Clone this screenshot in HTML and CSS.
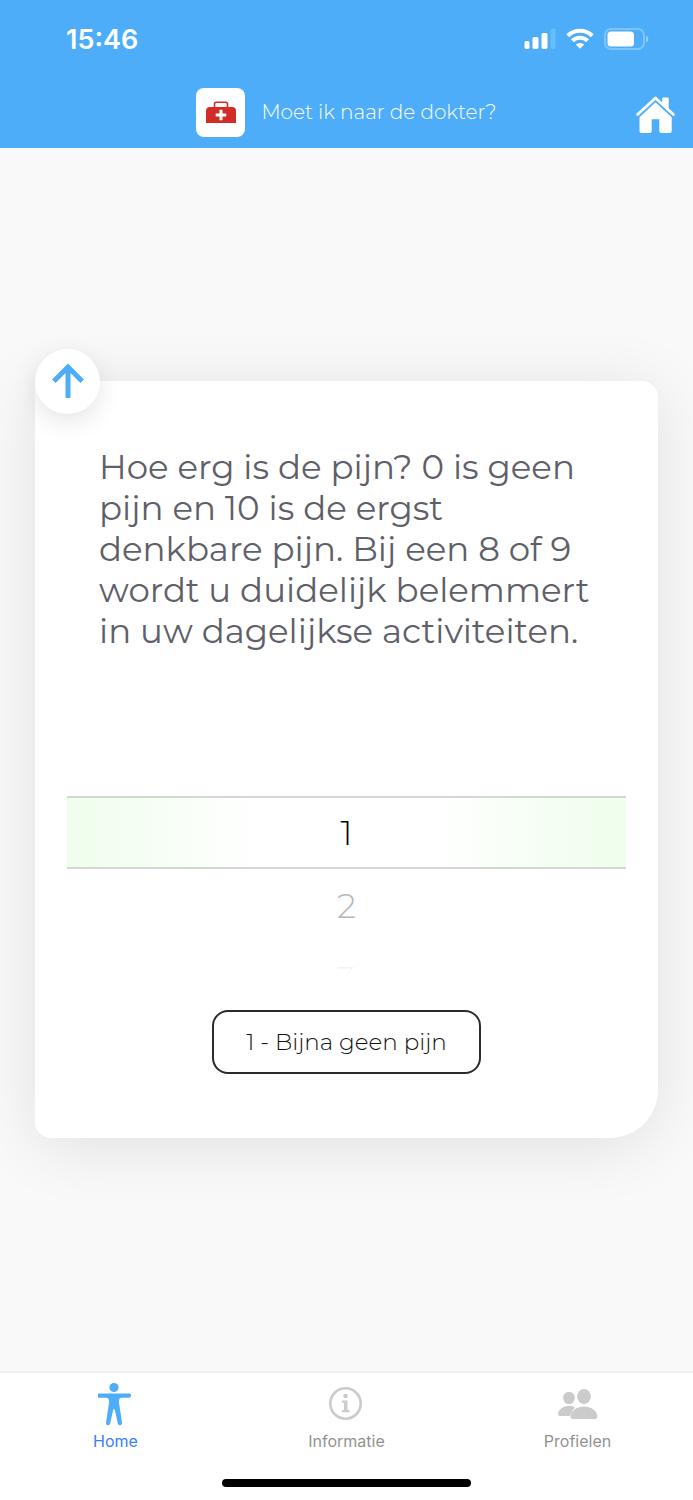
FILE: index.html
```html
<!DOCTYPE html>
<html lang="nl">
<head>
  <meta charset="UTF-8">
  <meta name="viewport" content="width=device-width, initial-scale=1">
  <title>Moet ik naar de dokter?</title>
  <link rel="stylesheet" href="styles.css">
</head>
<body>

<header class="header">
  <div class="status-bar">
    <span class="time">15:46</span>
    <div class="status-icons">
      <svg width="32" height="22" viewBox="0 0 32 22" fill="#fff">
        <rect x="0.500" y="13" width="5" height="8" rx="1.800"/>
        <rect x="8.500" y="9" width="6" height="12" rx="1.800"/>
        <rect x="17.500" y="5" width="6" height="16" rx="1.800"/>
        <rect x="26.500" y="0.500" width="5" height="20.500" rx="1.800" fill="#64c0fc"/>
      </svg>
      <svg width="28" height="22" viewBox="0 0 28 22" fill="none" stroke="#fff" stroke-width="4">
        <path d="M1.800 7.700a17.500 17.500 0 0 1 24.400 0"/>
        <path d="M6.400 12.800a11 11 0 0 1 15.200 0"/>
        <path d="M14 20.800l-4.200-4.200a6 6 0 0 1 8.400 0z" fill="#fff" stroke="none"/>
      </svg>
      <svg width="45" height="22" viewBox="0 0 45 22">
        <rect x="1" y="1" width="39" height="20" rx="6" fill="none" stroke="#7bc5fc" stroke-width="2"/>
        <rect x="3.500" y="3.500" width="26.500" height="15" rx="3.500" fill="#fff"/>
        <path d="M42 7.500c3 1 3 6 0 7z" fill="#8fcdfc"/>
      </svg>
    </div>
  </div>

  <div class="title-bar">
    <div class="brand">
      <span class="logo">
        <svg width="30" height="24" viewBox="0 0 30 24">
          <path d="M8.500 8V4.200a2 2 0 0 1 2-2h9a2 2 0 0 1 2 2V8" fill="none" stroke="#d12c26" stroke-width="1.600"/>
          <path d="M4 7h22a4 4 0 0 1 4 4v12H0V11a4 4 0 0 1 4-4z" fill="#d12c26"/>
          <path d="M15 9.700v10.600M9.700 15h10.600" stroke="#fff" stroke-width="3"/>
        </svg>
      </span>
      <h1>Moet ik naar de dokter?</h1>
    </div>
    <a href="#" class="home-link" aria-label="Home">
      <svg width="40" height="42" viewBox="0 0 40 42" fill="#fff">
        <path d="M1.600 23.500L19.500 7l17.900 16.500" fill="none" stroke="#4eadf9" stroke-width="7"/>
        <path d="M19.500 11.200L35.700 26.200V40a2 2 0 0 1-2 2h-8.400a2 2 0 0 1-2-2V28.300h-7.600V40a2 2 0 0 1-2 2H5.500a2 2 0 0 1-2-2V26.200z"/>
        <path d="M1.600 23.500L19.500 7l17.900 16.500" fill="none" stroke="#fff" stroke-width="2.800" stroke-linecap="round" stroke-linejoin="round"/>
        <path d="M26.300 12.500V7.500a1 1 0 0 1 1-1h4.400a1 1 0 0 1 1 1V18.500z"/>
      </svg>
    </a>
  </div>
</header>

<main class="content">
  <form class="card">
    <button type="button" class="back" aria-label="Terug">
      <svg width="32" height="36" viewBox="0 0 32 36" fill="none" stroke="#4eadf9" stroke-width="5">
        <path d="M1.800 17.200L16 3l14.200 14.200M16 3v31"/>
      </svg>
    </button>

    <p class="question">Hoe erg is de pijn? 0 is geen pijn en 10 is de ergst denkbare pijn. Bij een 8 of 9 wordt u duidelijk belemmert in uw dagelijkse activiteiten.</p>

    <div class="picker" role="radiogroup" aria-label="Pijnscore">
      <label class="option selected"><input type="radio" name="pain" value="1" checked>1</label>
      <label class="option near"><input type="radio" name="pain" value="2">2</label>
      <label class="option far"><input type="radio" name="pain" value="3">3</label>
    </div>

    <button type="submit" class="answer">1 - Bijna geen pijn</button>
  </form>
</main>

<footer class="footer">
  <nav class="tabs">
    <a href="#" class="tab active">
      <svg width="36" height="44" viewBox="1 0 36 44" fill="#4eadf9">
        <circle cx="17" cy="5.500" r="4.600"/>
        <path d="M2 11.400h30a2.100 2.100 0 0 1 0 4.300h-7.500q-2.500.3-2.700 3.800l3.200 21.200a2.100 2.100 0 0 1-4.200.8L18 28.500q-1-3-2 0L13.200 41.500a2.100 2.100 0 0 1-4.200-.8l3.200-21.200q-.2-3.500-2.700-3.800H2a2.100 2.100 0 0 1 0-4.300z"/>
      </svg>
      Home
    </a>
    <a href="#" class="tab">
      <svg width="36" height="44" viewBox="1 0 36 44" fill="#cbcbcb">
        <circle cx="17.500" cy="21.500" r="15.200" fill="none" stroke="#cbcbcb" stroke-width="2.600"/>
        <circle cx="17.500" cy="14" r="2.300"/>
        <path d="M14 18.500h5.500v9.500h2v2.300h-7.500v-2.300h2v-7.200h-2z"/>
      </svg>
      Informatie
    </a>
    <a href="#" class="tab">
      <svg width="40" height="44" viewBox="1 0 40 44" fill="#cbcbcb">
        <ellipse cx="12" cy="16" rx="5.800" ry="6.200"/>
        <path d="M18 25.200q-2.500-1.500-6-1.500C5 23.700 1 29 1 32q0 2 2 2h10q1-5 5-8.800z"/>
        <ellipse cx="27" cy="14.500" rx="6.800" ry="7.500"/>
        <path d="M27 24.500c8.500 0 13.300 5.500 13.300 9.800q0 2.700-2.500 2.700H16q-2.500 0-2.500-2.700c0-4.300 5-9.800 13.500-9.800z"/>
      </svg>
      Profielen
    </a>
  </nav>
  <div class="home-indicator"></div>
</footer>

</body>
</html>
```
FILE: styles.css
```css
* {
  box-sizing: border-box;
}

body {
  margin: 0;
  min-height: 100vh;
  display: flex;
  flex-direction: column;
  background: #f9f9f9;
  color: #5f5f69;
  font-family: Montserrat, Inter, sans-serif;
}

svg {
  display: block;
}

button {
  font: inherit;
  cursor: pointer;
}

.header {
  background: #4eadf9;
  color: #fff;
}

.status-bar {
  display: flex;
  justify-content: space-between;
  align-items: center;
  height: 76px;
  padding: 2px 44px 0 66px;
}

.time {
  font-family: Inter, sans-serif;
  font-size: 27px;
  font-weight: 600;
}

.status-icons {
  display: flex;
  gap: 10px;
}

.title-bar {
  display: grid;
  grid-template-columns: 1fr auto 1fr;
  align-items: center;
  height: 72px;
  padding: 0 17px;
}

.brand {
  grid-column: 2;
  display: flex;
  align-items: center;
  gap: 16px;
}

.logo {
  display: flex;
  justify-content: center;
  align-items: center;
  width: 49px;
  height: 49px;
  background: #fff;
  border-radius: 8px;
}

.brand h1 {
  margin: 0;
  font-size: 20px;
  font-weight: 300;
}

.home-link {
  justify-self: end;
}

.content {
  flex: 1;
  display: flex;
  align-items: center;
  padding: 48px 35px;
}

.card {
  position: relative;
  flex: 1;
  display: flex;
  flex-direction: column;
  align-items: center;
  padding: 66px 32px 64px;
  background: #fff;
  border-radius: 0 16px 48px 16px;
  box-shadow: 0 8px 64px rgba(0, 0, 0, 0.1);
}

/* sits on the top left corner of the card */
.back {
  position: absolute;
  top: -32px;
  left: 0;
  display: flex;
  justify-content: center;
  align-items: center;
  width: 65px;
  height: 65px;
  padding: 0;
  background: #fff;
  border: none;
  border-radius: 50%;
  box-shadow: 0 8px 24px rgba(0, 0, 0, 0.1);
}

.question {
  align-self: stretch;
  margin: 0;
  padding: 0 32px;
  font-size: 34px;
  line-height: 41px;
}

.picker {
  align-self: stretch;
  height: 290px;
  margin: 35px 0 33px;
  padding-top: 109px;
}

.option {
  display: flex;
  justify-content: center;
  align-items: center;
  height: 73px;
  font-size: 34px;
  font-weight: 300;
  cursor: pointer;
}

.option input {
  position: absolute;
  opacity: 0;
}

.selected {
  color: #000;
  border-top: 2px solid #d3d8d3;
  border-bottom: 2px solid #d3d8d3;
  background: linear-gradient(to right, #effeec, #fff 35%, #fff 65%, #effeec);
}

.near {
  color: #b8b8b8;
}

/* fades out at the edge of the wheel */
.far {
  color: #eee;
  mask-image: linear-gradient(#000 30%, transparent 50%);
}

.answer {
  height: 64px;
  padding: 0 32px;
  background: #fff;
  border: 2px solid #2b2b2b;
  border-radius: 16px;
  color: #111;
  font-size: 23px;
  font-weight: 300;
}

.footer {
  background: #fff;
  border-top: 2px solid #efefef;
}

.tabs {
  display: grid;
  grid-template-columns: repeat(3, 1fr);
}

.tab {
  display: flex;
  flex-direction: column;
  align-items: center;
  gap: 5px;
  padding-top: 9px;
  color: #929292;
  font-family: Inter, sans-serif;
  font-size: 16px;
  line-height: 20px;
  text-decoration: none;
}

.active {
  color: #3b80f7;
}

.home-indicator {
  width: 36%;
  height: 8px;
  margin: 28px auto 13px;
  background: #000;
  border-radius: 4px;
}
```
